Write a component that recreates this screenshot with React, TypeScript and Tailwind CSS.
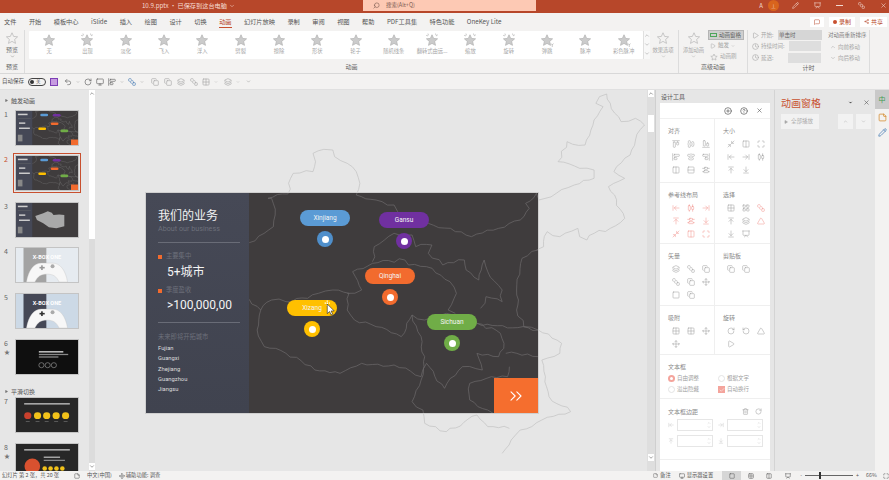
import {
  AlignCenterHorizontal, AlignCenterVertical, AlignEndHorizontal, AlignEndVertical, AlignHorizontalDistributeCenter,
  AlignStartHorizontal, AlignStartVertical, AlignVerticalDistributeCenter, ArrowDownToLine, ArrowLeftToLine,
  ArrowRightToLine, ArrowUpToLine, Check, ChevronDown, ChevronUp, ChevronsRight, CircleHelp, CirclePlus, Clock,
  Columns2, Copy, Grid2x2, Layers, LayoutGrid, Maximize, Minimize2, MessageSquare, Monitor, Move, Pencil, Play,
  Presentation, RotateCcw, RotateCw, Rows2, Search, Share2, Square, SquareStack, StickyNote, Trash2,
  Triangle, Undo2, X,
} from "lucide-react";
import type { LucideIcon } from "lucide-react";

const tabs = ["文件", "开始", "模板中心", "iSlide", "插入", "绘图", "设计", "切换", "动画", "幻灯片放映", "录制", "审阅", "视图", "帮助", "PDF工具集", "特色功能", "OneKey Lite"];
const effects = ["无", "出现", "淡化", "飞入", "浮入", "劈裂", "擦除", "形状", "轮子", "随机线条", "翻转式由远...", "缩放", "旋转", "弹跳", "脉冲", "彩色脉冲"];

const rawMapPaths = [
  "M428 458L495 410L500 375L490 325L480 325L535 312L550 250L605 245L612 215L605 190L635 178L660 180L665 200L700 220L725 245L735 280L725 315L780 330L830 345L840 365L880 410L925 400L1000 425L1045 440L1120 415L1180 390L1205 355L1195 340L1225 310L1232 330L1280 310L1330 285L1385 265L1385 240L1345 235L1285 215L1310 155L1360 165L1385 90L1410 50L1390 40L1400 20L1420 12L1430 40L1460 95L1500 85L1525 105L1500 150L1485 195L1440 245L1470 265L1425 290L1470 385L1430 415L1385 430L1365 450L1345 440L1340 415L1290 440L1255 425L1245 470L1225 480",
  "M1230 480L1185 505L1170 600L1170 660L1190 710L1230 720L1295 760L1290 790L1240 810L1250 860L1260 920L1320 965L1240 990L1180 1020L1155 1050L1130 1090",
  "M1150 1015L1090 1010L1060 975L975 1025L945 1010L915 1000L910 960L880 935L905 870",
  "M428 628L460 660L450 720L470 770L530 790L610 840L680 850L740 820L830 825L905 860L915 800L905 740L880 675L850 740L780 710L720 690L700 660L705 610L660 600L620 610L590 625L530 635L490 630L460 660",
  "M700 610L740 600L715 545L770 520L860 510L870 525L920 530L985 575L1003 610L980 660L1000 670",
  "M770 515L775 470L830 430L880 435L890 470L935 465L925 490L965 525L1025 510L1030 540L1065 570L1080 510L1090 545L1130 600L1130 635L1085 620L1070 655",
  "M880 675L915 690L975 670L1060 700L1125 730L1135 760L1120 800L1060 790L1075 840L1020 830L970 895L920 820L905 870",
  "M1060 700L1230 720M1140 790L1230 800M1150 830L1145 860L1100 860L1040 880L1040 930L1090 960L1105 970",
];

// breaks the long straight runs up so the borders look hand-jagged like the real map
function roughen(d: string) {
  let out = "";
  let px = 0;
  let py = 0;
  let seed = 1;
  for (const m of d.matchAll(/([ML])(\d+) (\d+)/g)) {
    const x = Number(m[2]);
    const y = Number(m[3]);
    if (m[1] === "L") {
      const len = Math.hypot(x - px, y - py);
      const steps = Math.floor(len / 14);
      for (let i = 1; i < steps; i++) {
        seed += 1;
        const off = Math.sin(seed * 12.9898) * 43758.5453;
        const r = (off - Math.floor(off) - 0.5) * 11;
        const t = i / steps;
        out += `L${(px + (x - px) * t + (r * (y - py)) / len).toFixed(1)} ${(py + (y - py) * t - (r * (x - px)) / len).toFixed(1)}`;
      }
    }
    out += `${m[1]}${x} ${y}`;
    px = x;
    py = y;
  }
  return out;
}

const mapPaths = rawMapPaths.map(roughen);

const pins = [
  { name: "Xinjiang", pos: "left-[154px] top-[17px]", pill: "bg-[#5b9bd5]", dot: "bg-[#4f8fcb]" },
  { name: "Gansu", pos: "left-[233px] top-[19px]", pill: "bg-[#7030a0]", dot: "bg-[#7030a0]" },
  { name: "Qinghai", pos: "left-[219px] top-[75px]", pill: "bg-[#f26b2e]", dot: "bg-[#f26b2e]" },
  { name: "Xizang", pos: "left-[141px] top-[107px]", pill: "bg-[#ffc000]", dot: "bg-[#ffc000]" },
  { name: "Sichuan", pos: "left-[281px] top-[121px]", pill: "bg-[#70ad47]", dot: "bg-[#70ad47]" },
];

function MapLines({ color }: { color: string }) {
  return (
    <svg viewBox="0 0 1568 1095" preserveAspectRatio="none" className="w-[565px] h-[365px] block" fill="none">
      {mapPaths.map((d, i) => (
        <path key={i} d={d} stroke={color} strokeWidth="0.7" vectorEffect="non-scaling-stroke" strokeLinejoin="round" />
      ))}
    </svg>
  );
}

function StarIcon({ outline, spark, tail, small }: { outline?: boolean; spark?: boolean; tail?: boolean; small?: boolean }) {
  return (
    <svg viewBox="0 0 24 24" className={small ? "w-[8px] h-[8px]" : "w-[14px] h-[14px]"}>
      <path
        d="M12 3l2.8 6.3 6.8.7-5.1 4.5 1.5 6.7L12 17.8 6 21.2l1.5-6.7L2.4 10l6.8-.7z"
        fill={outline ? "none" : "#cbcbcb"}
        stroke={outline ? "#b5b5b5" : "#b0b0b0"}
        strokeWidth={small ? 2 : 1.2}
      />
      {spark && <path d="M18 1l1 3M22 3l-3 2M5 1l1 3M2 4l3 1" stroke="#a0a0a0" strokeWidth="1" />}
      {tail && <path d="M19 18l2 2.5 2-2.5M21 20.5V24" stroke="#a0a0a0" strokeWidth="1" fill="none" />}
    </svg>
  );
}

function Thumb({ kind }: { kind: string }) {
  if (kind === "map" || kind === "shape") {
    return (
      <svg viewBox="142 308 1088 662" preserveAspectRatio="none" className="w-full h-full block">
        <rect x="142" y="308" width="1088" height="662" fill="#3f3c3d" />
        {kind === "map" ? (
          mapPaths.map((d, i) => <path key={i} d={d} fill="none" stroke="#8c8c8c" strokeWidth="5" />)
        ) : (
          <path d="M480 560L620 510L700 470L770 500L800 540L900 530L990 540L990 760L850 800L720 780L620 700L510 640z" fill="#a9a9a9" />
        )}
        <rect x="142" y="308" width="285" height="662" fill="#454856" />
        <rect x="175" y="360" width="170" height="30" fill="#cfcfcf" />
        <rect x="175" y="455" width="225" height="6" fill="#777" />
        <rect x="195" y="530" width="110" height="28" fill="#cfcfcf" />
        <rect x="195" y="630" width="190" height="28" fill="#cfcfcf" />
        <rect x="175" y="770" width="80" height="130" fill="#888" />
        {kind === "map" && (
          <>
            <rect x="568" y="360" width="138" height="50" rx="25" fill="#5b9bd5" />
            <rect x="787" y="365" width="138" height="50" rx="25" fill="#7030a0" />
            <rect x="750" y="533" width="138" height="50" rx="25" fill="#f26b2e" />
            <rect x="533" y="630" width="138" height="50" rx="25" fill="#ffc000" />
            <rect x="921" y="670" width="138" height="50" rx="25" fill="#70ad47" />
            <rect x="1107" y="863" width="123" height="107" fill="#f26b2e" />
          </>
        )}
      </svg>
    );
  }
  if (kind === "pad" || kind === "padDark") {
    return (
      <svg viewBox="0 0 190 108" preserveAspectRatio="none" className="w-full h-full block">
        <rect width="190" height="108" fill={kind === "pad" ? "#e6ebf0" : "#ccd9e6"} />
        <rect x="23" width="70" height="108" fill={kind === "pad" ? "#a3a3a3" : "#454856"} />
        <text x="95" y="34" textAnchor="middle" fontSize="17" fontWeight="700" fill="#fff" fontFamily="Roboto, sans-serif">X-BOX ONE</text>
        <path d="M32 108C38 70 55 48 78 48h34c23 0 40 22 46 60h-26c-8-18-18-25-37-25s-29 7-37 25z" fill="#f7f7f7" stroke="#bbb" />
        <rect x="72" y="60" width="16" height="5" fill={kind === "pad" ? "#999" : "#333"} />
        <rect x="77" y="55" width="5" height="15" fill={kind === "pad" ? "#999" : "#333"} />
        <circle cx="112" cy="58" r="6" fill="#aaa" />
      </svg>
    );
  }
  if (kind === "black") {
    return (
      <svg viewBox="0 0 190 108" preserveAspectRatio="none" className="w-full h-full block">
        <rect width="190" height="108" fill="#0f0f0f" />
        <rect x="70" y="35" width="75" height="5" fill="#bbb" />
        <rect x="70" y="44" width="90" height="4" fill="#888" />
        <rect x="70" y="52" width="60" height="4" fill="#888" />
        <circle cx="78" cy="80" r="8" fill="none" stroke="#999" strokeWidth="2" />
        <circle cx="97" cy="80" r="8" fill="none" stroke="#999" strokeWidth="2" />
        <circle cx="116" cy="80" r="8" fill="none" stroke="#999" strokeWidth="2" />
      </svg>
    );
  }
  return (
    <svg viewBox="0 0 190 108" preserveAspectRatio="none" className="w-full h-full block">
      <rect width="190" height="108" fill="#272727" />
      <rect x="25" y="16" width="140" height="5" fill="#aaa" />
      {kind === "faces" ? (
        <>
          <circle cx="36" cy="56" r="11" fill="#c9402d" />
          {[66, 94, 123, 152].map((x) => <circle key={x} cx={x} cy="56" r="11" fill="#f2c21a" />)}
          {[36, 66, 94, 123, 152].map((x) => <rect key={x} x={x - 6} y="74" width="12" height="2" fill="#777" />)}
        </>
      ) : (
        <>
          <circle cx="50" cy="70" r="24" fill="#d9512f" />
          <rect x="85" y="40" width="50" height="4" fill="#bbb" />
          <rect x="85" y="50" width="65" height="4" fill="#888" />
          {[88, 106, 124, 142].map((x) => <circle key={x} cx={x} cy="78" r="7" fill="#f2c21a" />)}
        </>
      )}
    </svg>
  );
}

function SlideRow({ n, kind, h, active, mark }: { n: number; kind: string; h: string; active?: boolean; mark?: boolean }) {
  return (
    <div className={`flex shrink-0 ${h}`}>
      <div className="w-[15px] pl-[4px] flex flex-col">
        <span className={`text-[7px] leading-[9px] ${active ? "text-[#c8502f]" : "text-[#666]"}`}>{n}</span>
        {mark && <span className="text-[6px] leading-[7px] text-[#777]">★</span>}
      </div>
      <div className={`w-[64px] h-[36px] border border-[#c4c4c4] ${active ? "outline outline-[1.5px] outline-[#c8502f] outline-offset-1" : ""}`}>
        <Thumb kind={kind} />
      </div>
    </div>
  );
}

function SectionLabel({ text, h }: { text: string; h: string }) {
  return (
    <div className={`flex items-center gap-[3px] pl-[5px] shrink-0 ${h}`}>
      <Triangle className="w-[3px] h-[3px] text-[#777] rotate-90" fill="#777" />
      <span className="text-[6px] text-[#555]">{text}</span>
    </div>
  );
}

function GroupLabel({ text }: { text: string }) {
  return <div className="h-[11px] text-center text-[6px] leading-[9px] text-[#666]">{text}</div>;
}

function Ribbon() {
  return (
    <div className="h-[44px] flex bg-[#f3f2f1] border-b border-[#d8d8d8] text-[#a6a6a6] text-[5.5px]">
      <div className="w-[25px] border-r border-[#dcdcdc] flex flex-col">
        <div className="h-[33px] flex flex-col items-center pt-[1px]">
          <StarIcon outline />
          <span className="text-[6px] leading-[8px] mt-[1px] text-[#777]">预览</span>
          <ChevronDown className="w-[5px] h-[5px] text-[#777]" />
        </div>
        <GroupLabel text="预览" />
      </div>
      <div className="w-[654px] border-r border-[#dcdcdc] flex flex-col">
        <div className="h-[33px] flex pl-[4px] pt-[1px]">
          <div className="w-[614px] h-[28px] bg-white flex rounded-[1px] pl-[1px]">
            {effects.map((e, i) => (
              <div key={e} className="w-[38.3px] flex flex-col items-center pt-[2px] shrink-0">
                <StarIcon spark={i === 1 || i === 10 || i === 11 || i === 12} tail={i === 13 || i === 15} />
                <span className="text-[5.3px] leading-[8px] whitespace-nowrap">{e}</span>
              </div>
            ))}
          </div>
          <div className="w-[7px] h-[28px] flex flex-col bg-[#f8f8f8] border-l border-[#e0e0e0] text-[#999]">
            <ChevronUp className="w-[6px] h-[9px]" />
            <ChevronDown className="w-[6px] h-[9px]" />
            <ChevronDown className="w-[6px] h-[9px]" />
          </div>
          <div className="w-[26px] flex flex-col items-center">
            <StarIcon outline />
            <span className="text-[5.3px] leading-[8px] mt-[1px] whitespace-nowrap">效果选项</span>
            <ChevronDown className="w-[5px] h-[5px]" />
          </div>
        </div>
        <GroupLabel text="动画" />
      </div>
      <div className="w-[69px] border-r border-[#dcdcdc] flex flex-col">
        <div className="h-[33px] flex">
          <div className="w-[29px] flex flex-col items-center pt-[1px]">
            <StarIcon outline />
            <span className="text-[5.3px] leading-[8px] mt-[1px] whitespace-nowrap">添加动画</span>
            <ChevronDown className="w-[5px] h-[5px]" />
          </div>
          <div className="flex flex-col">
            <div className="w-[36px] h-[10px] bg-[#cfcfcf] border border-[#b4b4b4] flex items-center gap-[2px] px-[1px] text-[#555]">
              <span className="w-[7px] h-[4px] border border-[#4ea55b] shrink-0" />
              <span className="whitespace-nowrap">动画窗格</span>
            </div>
            <div className="h-[11px] flex items-center gap-[2px] pl-[2px]">
              <Play className="w-[6px] h-[6px]" />
              <span>触发</span>
              <ChevronDown className="w-[4px] h-[4px]" />
            </div>
            <div className="h-[11px] flex items-center gap-[2px] pl-[2px]">
              <StarIcon outline small />
              <span className="whitespace-nowrap">动画刷</span>
            </div>
          </div>
        </div>
        <GroupLabel text="高级动画" />
      </div>
      <div className="w-[122px] border-r border-[#dcdcdc] flex flex-col">
        <div className="h-[33px] flex pl-[4px]">
          <div className="w-[72px] flex flex-col">
            <div className="h-[11px] flex items-center gap-[2px]">
              <Play className="w-[7px] h-[7px]" />
              <span className="w-[15px]">开始:</span>
              <span className="w-[44px] h-[10px] bg-[#d6d6d6] text-[#666] pl-[1px] leading-[10px] shrink-0">单击时</span>
            </div>
            <div className="h-[12px] flex items-center gap-[2px]">
              <Clock className="w-[7px] h-[7px]" />
              <span className="w-[26px] whitespace-nowrap">持续时间:</span>
              <span className="w-[32px] h-[10px] bg-[#dedede] shrink-0" />
            </div>
            <div className="h-[11px] flex items-center gap-[2px]">
              <Clock className="w-[7px] h-[7px]" />
              <span className="w-[25px]">延迟:</span>
              <span className="w-[33px] h-[10px] bg-[#dedede] shrink-0" />
            </div>
          </div>
          <div className="flex flex-col pl-[4px] whitespace-nowrap">
            <span className="h-[11px] leading-[11px] text-[#777]">对动画重新排序</span>
            <span className="h-[12px] flex items-center gap-[2px] pl-[2px]"><ChevronUp className="w-[6px] h-[6px]" />向前移动</span>
            <span className="h-[11px] flex items-center gap-[2px] pl-[2px]"><ChevronDown className="w-[6px] h-[6px]" />向后移动</span>
          </div>
        </div>
        <GroupLabel text="计时" />
      </div>
    </div>
  );
}

function ToolIcon({ Icon, red }: { Icon: LucideIcon; red?: boolean }) {
  return (
    <div className="w-[15px] h-[13px] flex items-center justify-center">
      <Icon className={`w-[8px] h-[8px] ${red ? "text-[#f0918a]" : "text-[#9a9a9a]"}`} strokeWidth={1.5} />
    </div>
  );
}

function ToolCell({ title, icons, red, h, border = true }: { title: string; icons: LucideIcon[]; red?: number[]; h: string; border?: boolean }) {
  return (
    <div className={`${h} pl-[8px] pt-[7px] ${border ? "border-r border-[#efefef]" : ""}`}>
      <div className="h-[10px] text-[6px] leading-[10px] text-[#8a8a8a]">{title}</div>
      <div className="grid grid-cols-[15px_15px_15px] mt-[1px]">
        {icons.map((Icon, i) => (
          <ToolIcon key={i} Icon={Icon} red={red ? red.includes(i) : false} />
        ))}
      </div>
    </div>
  );
}

function DesignPanel() {
  return (
    <div className="w-[119px] bg-[#e6e6e6] shrink-0 pl-[4px] pr-[4px] border-l border-[#cfcfcf] flex flex-col">
      <div className="h-[13px] text-[6px] leading-[13px] pl-[1px] text-[#555]">设计工具</div>
      <div className="bg-white flex-1 flex flex-col overflow-hidden">
        <div className="h-[16px] flex items-center justify-end gap-[8px] pr-[7px] border-b border-[#f0f0f0] text-[#555] shrink-0">
          <CirclePlus className="w-[8px] h-[8px]" />
          <CircleHelp className="w-[8px] h-[8px]" />
          <X className="w-[7px] h-[7px]" />
        </div>
        <div className="grid grid-cols-[55px_56px] border-b border-[#efefef]">
          <ToolCell h="h-[63px]" title="对齐" icons={[AlignStartHorizontal, AlignCenterHorizontal, AlignEndHorizontal, AlignStartVertical, AlignCenterVertical, AlignEndVertical, Columns2, Rows2, AlignVerticalDistributeCenter]} />
          <ToolCell h="h-[63px]" border={false} title="大小" icons={[Minimize2, Columns2, Maximize, ArrowLeftToLine, ArrowRightToLine, AlignHorizontalDistributeCenter, ArrowUpToLine, ArrowDownToLine]} />
        </div>
        <div className="grid grid-cols-[55px_56px] border-b border-[#efefef]">
          <ToolCell h="h-[60px]" title="参考线布局" red={[0, 1, 2, 3, 4, 5, 6, 7, 8]} icons={[ArrowLeftToLine, AlignHorizontalDistributeCenter, ArrowRightToLine, ArrowUpToLine, AlignVerticalDistributeCenter, ArrowDownToLine, Minimize2, Columns2, Maximize]} />
          <ToolCell h="h-[60px]" border={false} title="选择" red={[2, 5]} icons={[Grid2x2, LayoutGrid, SquareStack, ArrowUpToLine, Layers, Triangle, ArrowDownToLine, Presentation]} />
        </div>
        <div className="grid grid-cols-[55px_56px] border-b border-[#efefef]">
          <ToolCell h="h-[61px]" title="矢量" icons={[Layers, SquareStack, Copy, SquareStack, Copy, Move, Square, Copy]} />
          <ToolCell h="h-[61px]" border={false} title="剪贴板" icons={[Copy, Copy]} />
        </div>
        <div className="grid grid-cols-[55px_56px] border-b border-[#efefef]">
          <ToolCell h="h-[48px]" title="吸附" icons={[Grid2x2, Grid2x2, Move, Move]} />
          <ToolCell h="h-[48px]" border={false} title="旋转" icons={[RotateCw, RotateCcw, Triangle, Play]} />
        </div>
        <div className="h-[44px] pl-[8px] pt-[7px] border-b border-[#efefef] text-[5.5px] text-[#a0a0a0] shrink-0">
          <div className="h-[10px] text-[6px] leading-[10px] text-[#8a8a8a]">文本框</div>
          <div className="grid grid-cols-[50px_50px] mt-[1px]">
            <div className="h-[11px] flex items-center gap-[2px]">
              <span className="w-[7px] h-[7px] rounded-full bg-[#f4a49c] flex items-center justify-center"><span className="w-[3px] h-[3px] rounded-full bg-white" /></span>自由调整
            </div>
            <div className="h-[11px] flex items-center gap-[2px]">
              <span className="w-[7px] h-[7px] rounded-full border border-[#e4e4e4]" />根据文字
            </div>
            <div className="h-[11px] flex items-center gap-[2px]">
              <span className="w-[7px] h-[7px] rounded-full border border-[#e4e4e4]" />溢出隐藏
            </div>
            <div className="h-[11px] flex items-center gap-[2px]">
              <span className="w-[7px] h-[7px] bg-[#f4a49c] flex items-center justify-center"><Check className="w-[6px] h-[6px] text-white" /></span>自动换行
            </div>
          </div>
        </div>
        <div className="h-[61px] pl-[8px] pt-[7px] border-b border-[#efefef] shrink-0">
          <div className="h-[10px] flex items-center justify-between pr-[8px] text-[6px] text-[#8a8a8a]">
            <span>文本框边距</span>
            <span className="flex gap-[6px] text-[#aaa]"><Trash2 className="w-[7px] h-[7px]" /><RotateCw className="w-[7px] h-[7px]" /></span>
          </div>
          <div className="grid grid-cols-[50px_50px] gap-y-[4px] mt-[3px]">
            {[ArrowLeftToLine, ArrowRightToLine, ArrowUpToLine, ArrowDownToLine].map((Icon, i) => (
              <div key={i} className="flex items-center gap-[3px]">
                <Icon className="w-[6px] h-[6px] text-[#ccc]" />
                <span className="w-[36px] h-[12px] border border-[#e6e6e6] flex flex-col items-end justify-center pr-[1px] text-[#bbb]">
                  <ChevronUp className="w-[4px] h-[4px]" />
                  <ChevronDown className="w-[4px] h-[4px]" />
                </span>
              </div>
            ))}
          </div>
        </div>
      </div>
    </div>
  );
}

function Slide() {
  return (
    <div className="relative w-[392px] h-[220px] bg-[#3f3c3d] overflow-hidden flex outline outline-1 outline-[#cfcfcf] font-['Roboto','Noto_Sans_CJK_SC',sans-serif]">
      <div className="absolute -left-[51px] -top-[103px]">
        <MapLines color="#6d6a6b" />
      </div>
      <div className="relative w-[103px] h-full bg-gradient-to-b from-[#464956] to-[#40434f] pl-[12px] pr-[9px] pt-[16px] shrink-0">
        <div className="text-[12px] leading-[14px] text-[#f2f2f2]">我们的业务</div>
        <div className="text-[7.2px] leading-[10px] mt-[1px] text-[#6d707b]">About our business</div>
        <div className="h-px bg-[#696c77] mt-[8px]" />
        <div className="flex items-center gap-[4px] mt-[9px] h-[10px] text-[6.3px] text-[#6d707b]">
          <span className="w-[4px] h-[4px] bg-[#f26b2e]" />主要集中
        </div>
        <div className="ml-[9px] mt-[2px] h-[16px] text-[12px] leading-[16px] text-[#f4f4f4]">5+城市</div>
        <div className="flex items-center gap-[4px] mt-[6px] h-[10px] text-[6.3px] text-[#6d707b]">
          <span className="w-[4px] h-[4px] bg-[#f26b2e]" />季度盈收
        </div>
        <div className="ml-[9px] mt-[1px] h-[16px] text-[12px] leading-[16px] text-[#f4f4f4] whitespace-nowrap">&gt;100,000,00</div>
        <div className="h-px bg-[#696c77] mt-[9px]" />
        <div className="mt-[9px] h-[11px] text-[6.3px] leading-[11px] text-[#6d707b]">未来即将开拓城市</div>
        <div className="text-[5.8px] leading-[10.3px] text-[#dcdcdc]">
          {["Fujian", "Guangxi", "Zhejiang", "Guangzhou", "Jiangsu"].map((c) => (
            <div key={c}>{c}</div>
          ))}
        </div>
      </div>
      {pins.map((p) => (
        <div key={p.name} className={`absolute ${p.pos} w-[50px] flex flex-col items-center gap-[5px]`}>
          <div className={`${p.pill} w-full h-[16px] rounded-full text-center text-[6.5px] leading-[16px] text-[#f4f4f4]`}>{p.name}</div>
          <div className={`${p.dot} w-[16px] h-[16px] rounded-full flex items-center justify-center`}>
            <span className="w-[7px] h-[7px] rounded-full bg-white" />
          </div>
        </div>
      ))}
      <svg viewBox="0 0 16 18" className="absolute left-[176px] top-[106px] w-[14px] h-[17px]">
        <path d="M6 1v6M3 4h6" stroke="#fff" strokeWidth="1.4" strokeDasharray="1.5 1" />
        <path d="M6 5v11l2.6-2.4 1.8 3.8 1.8-.8-1.8-3.6H14z" fill="#fff" stroke="#222" strokeWidth="0.7" />
      </svg>
      <div className="absolute right-0 bottom-0 w-[44px] h-[35px] bg-[#f56e2e] flex items-center justify-center">
        <ChevronsRight className="w-[20px] h-[20px] text-white" strokeWidth={1.3} />
      </div>
    </div>
  );
}

export default function App() {
  return (
    <div className="w-[889px] h-[480px] overflow-hidden flex flex-col bg-[#e6e6e6] font-['Noto_Sans_CJK_SC','Liberation_Sans',sans-serif]">
      <div className="h-[13px] shrink-0 bg-[#b7472a] flex text-white relative">
        <div className="w-[363px] flex justify-end items-center pr-[128px] pb-[2px] text-[6.2px] text-[#f6dcd3] whitespace-nowrap">
          10.9.pptx • 已保存到这台电脑
          <ChevronDown className="w-[6px] h-[6px] ml-[2px]" />
        </div>
        <div className="w-[173px] h-[11px] bg-[#fdc9b4] flex items-center pl-[10px] gap-[6px] text-[#7a5a50] text-[5.5px]">
          <Search className="w-[7px] h-[7px] -scale-x-100" />
          搜索(Alt+Q)
        </div>
        <div className="flex-1 flex items-center justify-end gap-[15px] pr-[2px] pb-[2px] text-[#f1d9d0]">
          <span className="text-[6px] mr-[-10px]">A</span>
          <span className="w-[11px] h-[11px] rounded-full bg-[#d8641d] text-[5px] leading-[11px] text-center mr-[-2px]">⊥</span>
          <Pencil className="w-[7px] h-[7px]" />
          <Presentation className="w-[7px] h-[7px]" />
          <span className="w-[7px] h-px bg-[#f1d9d0]" />
          <SquareStack className="w-[7px] h-[7px]" />
          <X className="w-[7px] h-[7px]" />
        </div>
      </div>

      <div className="h-[17px] shrink-0 bg-[#f3f2f1] flex items-center pl-[4px] pr-[3px] gap-[12.5px] text-[6.2px] text-[#555]">
        {tabs.map((t) => (
          <div key={t} className={`h-[13px] leading-[13px] whitespace-nowrap ${t === "动画" ? "border-b border-[#c8502f] text-[#b7472a]" : ""}`}>
            {t}
          </div>
        ))}
        <div className="ml-auto flex items-center gap-[5px] text-[6px] text-[#b7472a] mr-[-1px]">
          <span className="w-[14px] h-[10px] bg-white flex items-center justify-center"><MessageSquare className="w-[6px] h-[6px]" /></span>
          <span className="w-[26px] h-[10px] bg-white flex items-center justify-center gap-[2px]"><span className="w-[4px] h-[4px] rounded-full bg-[#c8502f]" />录制</span>
          <span className="w-[27px] h-[10px] bg-white flex items-center justify-center gap-[2px]"><Share2 className="w-[5px] h-[5px]" />共享</span>
        </div>
      </div>

      <Ribbon />

      <div className="h-[16px] shrink-0 bg-[#f3f2f1] flex items-center gap-[4px] pl-[2px] text-[#888] border-b border-[#e0e0e0]">
        <span className="text-[5.5px] text-[#555] whitespace-nowrap">自动保存</span>
        <span className="w-[18px] h-[8px] rounded-full border border-[#444] flex items-center pl-[1px] gap-[2px] text-[4.5px] text-[#555]">
          <span className="w-[4px] h-[4px] rounded-full bg-[#333]" />关
        </span>
        <span className="w-[8px] h-[8px] bg-[#c79be0] border border-[#7c3fb5]" />
        <Undo2 className="w-[8px] h-[8px] text-[#666] ml-[2px]" />
        <ChevronDown className="w-[4px] h-[4px]" />
        <RotateCw className="w-[8px] h-[8px] text-[#666]" />
        <Monitor className="w-[8px] h-[8px] text-[#666]" />
        <AlignStartVertical className="w-[8px] h-[8px] text-[#666]" />
        <ChevronDown className="w-[4px] h-[4px]" />
        <SquareStack className="w-[8px] h-[8px] text-[#4a7db5]" />
        <ChevronDown className="w-[4px] h-[4px] mr-[3px]" />
        <Copy className="w-[8px] h-[8px] text-[#aaa]" />
        <Copy className="w-[8px] h-[8px] text-[#aaa] ml-[1px]" />
        <Layers className="w-[8px] h-[8px] text-[#aaa] ml-[1px]" />
        <SquareStack className="w-[8px] h-[8px] text-[#aaa] ml-[1px]" />
        <Grid2x2 className="w-[8px] h-[8px] text-[#aaa]" />
        <ChevronDown className="w-[4px] h-[4px] text-[#aaa]" />
        <Layers className="w-[8px] h-[8px] text-[#aaa] ml-[2px]" />
        <ChevronDown className="w-[4px] h-[4px] text-[#aaa]" />
        <ChevronDown className="w-[5px] h-[5px] ml-[2px]" />
      </div>

      <div className="flex-1 flex min-h-0">
        <div className="w-[95px] shrink-0 flex bg-[#e6e6e6] overflow-hidden">
          <div className="w-[89px] flex flex-col overflow-hidden">
            <SectionLabel text="触发动画" h="h-[20px]" />
            <SlideRow n={1} kind="map" h="h-[45px]" />
            <SlideRow n={2} kind="map" h="h-[47px]" active />
            <SlideRow n={3} kind="shape" h="h-[45px]" />
            <SlideRow n={4} kind="pad" h="h-[46px]" />
            <SlideRow n={5} kind="padDark" h="h-[46px]" />
            <SlideRow n={6} kind="black" h="h-[46px]" mark />
            <SectionLabel text="平滑切换" h="h-[12px]" />
            <SlideRow n={7} kind="faces" h="h-[46px]" />
            <SlideRow n={8} kind="face" h="h-[46px]" mark />
          </div>
          <div className="w-[6px] bg-[#dcdcdc] flex flex-col items-center justify-between">
            <div className="w-full bg-white">
              <ChevronUp className="w-[6px] h-[7px] text-[#444]" />
              <div className="h-[142px] bg-white" />
            </div>
            <div className="w-full h-[7px] bg-white mb-[1px]">
              <ChevronDown className="w-[6px] h-[7px] text-[#444]" />
            </div>
          </div>
        </div>

        <div className="relative flex-1 min-w-0 overflow-hidden bg-[#e6e6e6]">
          <div className="absolute left-0 top-0">
            <MapLines color="#c2c2c2" />
          </div>
          <div className="absolute left-[51px] top-[103px]">
            <Slide />
          </div>
          <div className="absolute right-0 top-0 bottom-0 w-[8px] bg-[#dedede] flex flex-col items-center">
            <ChevronUp className="w-[6px] h-[7px] text-[#444] bg-white" />
            <div className="w-[6px] h-[17px] mt-[18px] bg-white" />
            <ChevronDown className="w-[6px] h-[7px] text-[#444] bg-white mt-auto mb-[10px]" />
          </div>
        </div>

        <DesignPanel />

        <div className="w-[101px] shrink-0 bg-[#e6e6e6] border-l border-[#d4d4d4] pl-[6px] pr-[4px]">
          <div className="h-[24px] flex items-center justify-between pr-[1px]">
            <span className="text-[10px] text-[#c8502f]">动画窗格</span>
            <span className="flex items-center gap-[10px] text-[#555]">
              <ChevronDown className="w-[5px] h-[5px]" fill="#555" />
              <X className="w-[7px] h-[7px]" />
            </span>
          </div>
          <div className="flex items-center justify-between text-[5.5px] text-[#aaa]">
            <div className="w-[38px] h-[15px] bg-[#f2f2f2] flex items-center gap-[3px] pl-[3px]">
              <Play className="w-[4px] h-[4px]" fill="#aaa" />全部播放
            </div>
            <div className="flex gap-[3px]">
              <span className="w-[15px] h-[15px] bg-[#f2f2f2] flex items-center justify-center"><ChevronUp className="w-[5px] h-[5px]" /></span>
              <span className="w-[15px] h-[15px] bg-[#f2f2f2] flex items-center justify-center"><ChevronDown className="w-[5px] h-[5px]" /></span>
            </div>
          </div>
        </div>

        <div className="w-[14px] shrink-0 bg-[#f3f2f1] flex flex-col items-center">
          <div className="w-full h-[19px] bg-[#c9c9c9] text-[7px] leading-[19px] text-center text-[#3f9a4f]">中</div>
          <StickyNote className="w-[9px] h-[9px] mt-[4px] text-[#d48a2a]" />
          <Pencil className="w-[9px] h-[9px] mt-[6px] text-[#4a7db5]" />
        </div>
      </div>

      <div className="h-[9px] shrink-0 bg-[#f3f2f1] flex items-center text-[5.3px] text-[#555] whitespace-nowrap">
        <span className="pl-[2px] w-[74px]">幻灯片 第 2 张，共 20 张</span>
        <StickyNote className="w-[6px] h-[6px]" />
        <span className="ml-[7px]">中文(中国)</span>
        <span className="ml-[7px] flex items-center gap-[1px]"><Move className="w-[6px] h-[6px]" />辅助功能: 调查</span>
        <div className="ml-auto flex items-center h-full">
          <span className="flex items-center gap-[2px] mr-[8px]"><StickyNote className="w-[5px] h-[5px]" />备注</span>
          <span className="flex items-center gap-[2px] mr-[9px]"><Monitor className="w-[6px] h-[6px]" />显示器设置</span>
          <span className="w-[19px] h-full bg-[#d6d6d6] flex items-center justify-center"><Square className="w-[6px] h-[6px]" /></span>
          <span className="w-[19px] flex justify-center"><Grid2x2 className="w-[6px] h-[6px]" /></span>
          <span className="w-[18px] flex justify-center"><Columns2 className="w-[6px] h-[6px]" /></span>
          <span className="w-[20px] flex justify-center"><Presentation className="w-[6px] h-[6px]" /></span>
          <span className="ml-[2px]">-</span>
          <span className="relative w-[48px] h-px bg-[#666] mx-[3px]">
            <span className="absolute left-[14px] -top-[3px] w-[2px] h-[7px] bg-[#333]" />
          </span>
          <span>+</span>
          <span className="ml-[7px] w-[17px]">66%</span>
          <Maximize className="w-[6px] h-[6px]" />
        </div>
      </div>
    </div>
  );
}
